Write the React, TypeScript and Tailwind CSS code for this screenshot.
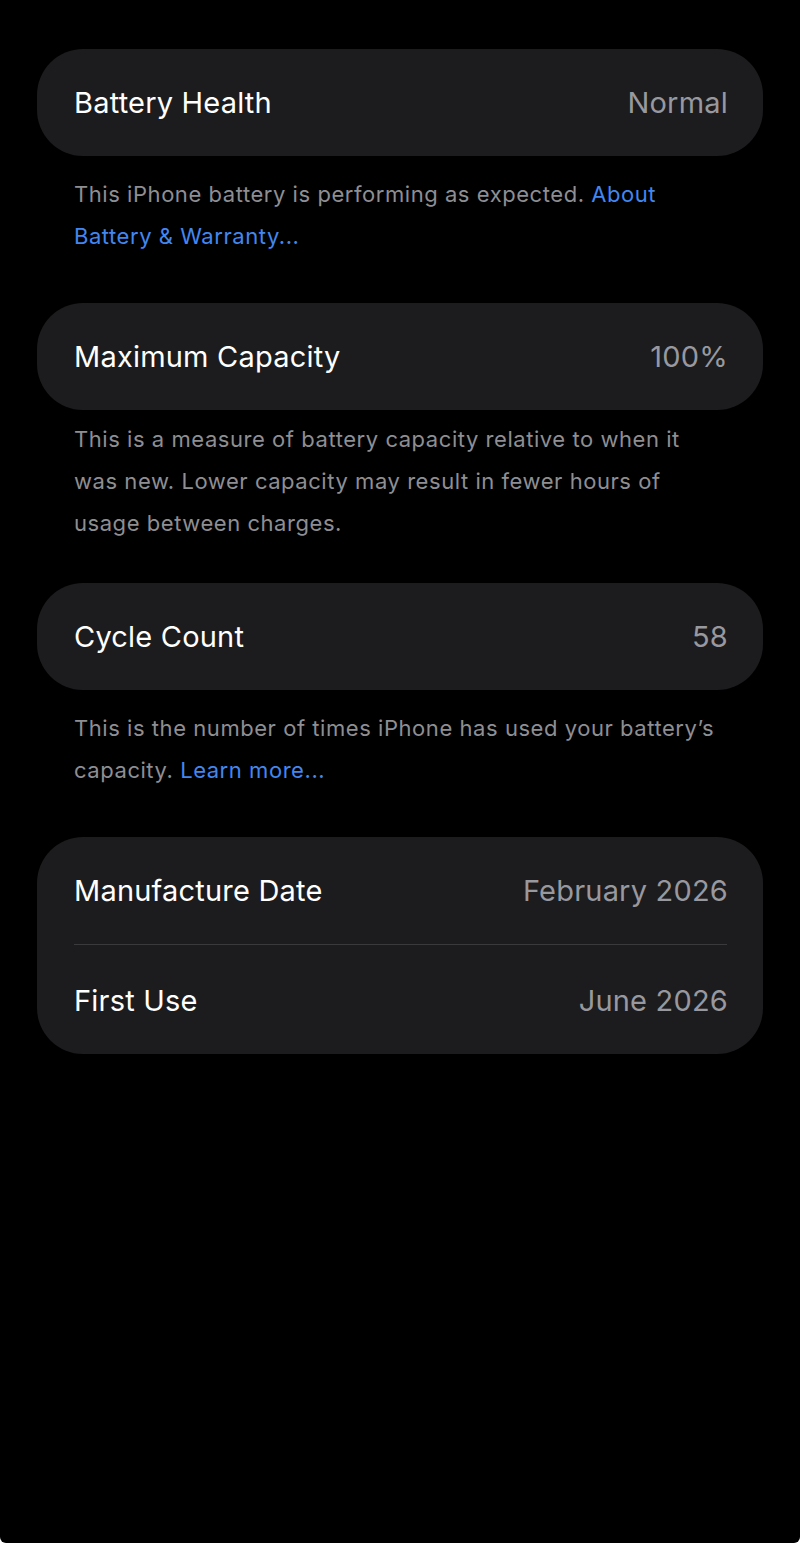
import React from 'react';

const font = { fontFamily: 'Inter, "Noto Sans", sans-serif' };

function Row({ label, value }: { label: string; value: string }) {
    return (
        <div className="flex items-center justify-between h-[107px] pl-[37px] pr-[35px]">
            <span className="text-[29px] text-white tracking-[0.2px]">{label}</span>
            <span className="text-[29px] text-[#98989f] tracking-[0.2px]">{value}</span>
        </div>
    );
}

function Card({ label, value }: { label: string; value: string }) {
    return (
        <div className="mx-[37px] rounded-[46px] bg-[#1c1c1e]">
            <Row label={label} value={value} />
        </div>
    );
}

function Footer({ children, className }: { children: React.ReactNode; className?: string }) {
    return (
        <p className={`pl-[74px] pr-[73px] text-[22px] leading-[42px] tracking-[0.55px] text-[#8e8e93] ${className ?? ''}`}>
            {children}
        </p>
    );
}

export default function App() {
    return (
        <div className="bg-white h-[1543px] w-full" style={font}>
            <div className="bg-black h-full rounded-b-[6px] pt-[49px] flex flex-col">
                {/* Battery health */}
                <Card label="Battery Health" value="Normal" />
                <Footer className="mt-[17px]">
                    This iPhone battery is performing as expected.{' '}
                    <span className="text-[#4287f0]">About Battery &amp; Warranty...</span>
                </Footer>

                {/* Max capacity */}
                <div className="mt-[46px]">
                    <Card label="Maximum Capacity" value="100%" />
                </div>
                <Footer className="mt-[8px]">
                    This is a measure of battery capacity relative to when it was new. Lower capacity may result in fewer hours of usage between charges.
                </Footer>

                {/* Cycle count */}
                <div className="mt-[39px]">
                    <Card label="Cycle Count" value="58" />
                </div>
                <Footer className="mt-[17px]">
                    This is the number of times iPhone has used your battery’s capacity.{' '}
                    <span className="text-[#4287f0]">Learn more...</span>
                </Footer>

                {/* Dates */}
                <div className="mt-[46px] mx-[37px] rounded-[46px] bg-[#1c1c1e]">
                    <Row label="Manufacture Date" value="February 2026" />
                    <div className="ml-[37px] mr-[36px] h-px bg-[#3a3a3c]" />
                    <div className="h-[2px]" />
                    <Row label="First Use" value="June 2026" />
                </div>
            </div>
        </div>
    );
}
